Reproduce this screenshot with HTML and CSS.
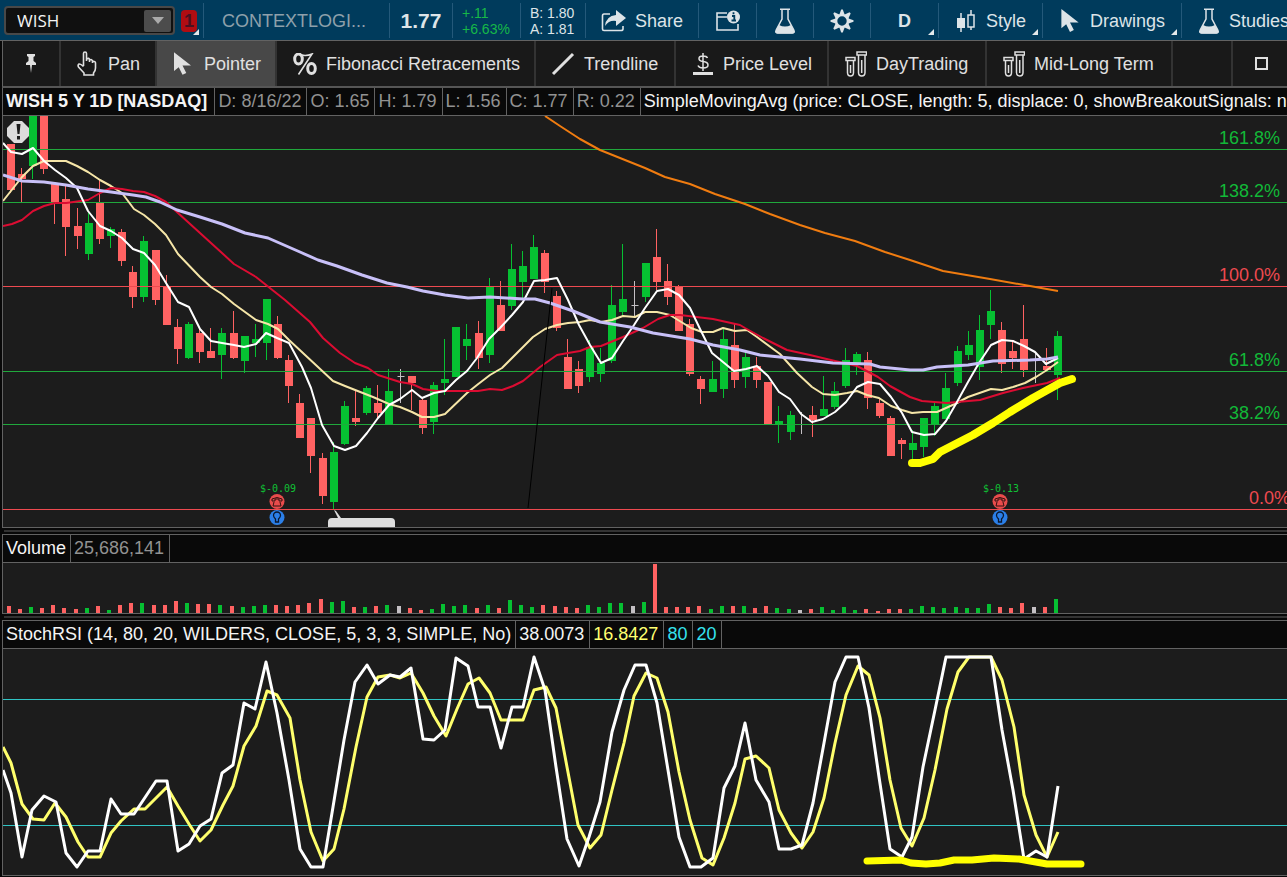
FILE: index.html
```html
<!DOCTYPE html>
<html lang="en">
<head>
<meta charset="utf-8">
<title>WISH 5 Y 1D</title>
<link rel="stylesheet" href="styles.css">
</head>
<body>
<svg class="defs" aria-hidden="true">
  <symbol id="i-pointer" viewBox="0 0 18 24"><path d="M0 0V20L5 16L9 24L13 22L9 14H18Z" fill="currentColor"/></symbol>
  <symbol id="i-flask" viewBox="0 0 22 26"><path d="M6 1.2H16M8 2V11L2.2 22Q1 25 4 25H18Q21 25 19.800 22L14 11V2" fill="none" stroke="currentColor" stroke-width="1.500"/><path d="M5 17Q11 20 17 17L21 24L19 25.500H3L1 24Z" fill="currentColor"/></symbol>
  <symbol id="i-tubes" viewBox="0 0 22 26"><g fill="none" stroke="currentColor" stroke-width="1.500"><rect x="1" y="6.500" width="9" height="3"/><path d="M2.500 9.500V21.500Q2.500 25 5.500 25Q8.500 25 8.500 21.500V9.500"/><rect x="12" y="1" width="9.500" height="3"/><path d="M13.500 4V21.500Q13.500 25 16.700 25Q20 25 20 21.500V4"/><path d="M5.500 14V22M16.700 9V22"/></g></symbol>
</svg>
<div class="app">
  <header class="topbar">
    <div class="cell symbol-cell">
      <div class="symbol-box">
        <input class="symbol-input" type="text" value="WISH" aria-label="Symbol">
        <button class="drop" aria-label="Symbol list"><svg width="12" height="7"><path d="M0 0H12L6 7Z" fill="#aaa"/></svg></button>
      </div>
      <button class="link-badge corner"><span class="badge-number">1</span></button>
    </div>
    <div class="cell company">CONTEXTLOGI...</div>
    <div class="cell price">1.77</div>
    <div class="cell change"><span>+.11</span><span>+6.63%</span></div>
    <div class="cell quote"><span>B: 1.80</span><span>A: 1.81</span></div>
    <button class="cell share"><svg width="26" height="22" viewBox="0 0 26 22"><path d="M9 4H3Q1.500 4 1.500 6V19Q1.500 20.500 3 20.500H20Q22 20.500 22 19V16" fill="none" stroke="currentColor" stroke-width="1.600"/><path d="M15 0L25 8L15 16V11Q8 10 4 16Q5 6 15 5Z" fill="currentColor"/></svg>Share</button>
    <button class="cell tool-info" aria-label="Info"><svg width="26" height="22" viewBox="0 0 26 22"><path d="M12 3H2V20H23V14M2 7H12" fill="none" stroke="currentColor" stroke-width="1.600"/><circle cx="18.500" cy="7" r="6.500" fill="currentColor"/><path d="M18.500 2.200V4.200M17 6H19.300V10.500M16.500 10.500H21" stroke="#003b5c" stroke-width="1.800" fill="none"/></svg></button>
    <button class="cell tool-small" aria-label="Lab"><svg width="22" height="26"><use href="#i-flask"/></svg></button>
    <button class="cell tool-small" aria-label="Settings"><svg width="24" height="24" viewBox="-12 -12 24 24"><circle r="6" fill="none" stroke="currentColor" stroke-width="2.600"/><g fill="currentColor"><path id="tooth" d="M-2.600 -6.500L-.8 -11.500H.8L2.600 -6.500Z"/><use href="#tooth" transform="rotate(45)"/><use href="#tooth" transform="rotate(90)"/><use href="#tooth" transform="rotate(135)"/><use href="#tooth" transform="rotate(180)"/><use href="#tooth" transform="rotate(225)"/><use href="#tooth" transform="rotate(270)"/><use href="#tooth" transform="rotate(315)"/></g></svg></button>
    <button class="cell timeframe corner">D</button>
    <button class="cell style corner"><svg width="18" height="24" viewBox="0 0 18 24"><path d="M4 4V23M14 1V6M14 18V21" stroke="currentColor" stroke-width="1.500"/><rect x="0" y="9" width="8" height="10" fill="currentColor"/><rect x="11" y="6" width="6" height="12" fill="none" stroke="currentColor" stroke-width="1.500"/></svg>Style</button>
    <button class="cell drawings corner"><svg width="18" height="23"><use href="#i-pointer"/></svg>Drawings</button>
    <button class="cell studies"><svg width="22" height="26"><use href="#i-flask"/></svg>Studies</button>
  </header>

  <nav class="toolbar">
    <button class="tool pin" aria-label="Pin"><svg width="10" height="19" viewBox="0 0 10 19"><path d="M1 0H9V2L7.500 3V7L10 9V11H6L5 19L4 11H0V9L2.500 7V3L1 2Z" fill="currentColor"/></svg></button>
    <button class="tool pan"><svg width="20" height="25" viewBox="0 0 20 25"><path d="M6.500 15V2.500Q6.500 1 8 1Q9.500 1 9.500 2.500V10M9.500 10V8Q12 6.500 12.500 8.500V11M12.500 9Q15 8 15.500 10V12M15.500 10.500Q18.500 10 18.500 12V17Q18.500 20 16.500 22V24H7V22L1.500 16Q.5 14 2 13Q3.500 12.500 6.500 15.500" fill="none" stroke="currentColor" stroke-width="1.600"/></svg>Pan</button>
    <button class="tool pointer"><svg width="17" height="23"><use href="#i-pointer"/></svg>Pointer</button>
    <button class="tool fib"><svg width="24" height="22" viewBox="0 0 24 22"><g fill="none" stroke="currentColor"><ellipse cx="5.500" cy="6" rx="3.800" ry="5" stroke-width="3"/><ellipse cx="18.500" cy="15.500" rx="3.800" ry="5" stroke-width="3"/><path d="M5.500 1Q12 4 19 1L5.500 21.500" stroke-width="1.600"/></g></svg>Fibonacci Retracements</button>
    <button class="tool trend"><svg width="24" height="24"><path d="M2 22L22 2" stroke="currentColor" stroke-width="3"/></svg>Trendline</button>
    <button class="tool price-level"><svg width="20" height="22" viewBox="0 0 20 22"><path d="M14.500 5Q13.500 3 10 3Q6 3 6 5.500Q6 8 10 8.500Q15 9 15 12Q15 15 10 15Q6 15 5 12.500M10 0V18" fill="none" stroke="currentColor" stroke-width="1.500"/><path d="M0 20.500H20" stroke="currentColor" stroke-width="3"/></svg>Price Level</button>
    <button class="tool day"><svg width="22" height="26"><use href="#i-tubes"/></svg>DayTrading</button>
    <button class="tool mid"><svg width="22" height="26"><use href="#i-tubes"/></svg>Mid-Long Term</button>
    <div class="tool blank"></div>
    <button class="tool expand" aria-label="Maximize"><svg width="13" height="13"><rect x="1" y="1" width="11" height="11" fill="none" stroke="currentColor" stroke-width="2"/></svg></button>
  </nav>

  <main class="panes">
    <section class="pane">
      <div class="legend">
        <strong class="title">WISH 5 Y 1D [NASDAQ]</strong><span class="dim">D: 8/16/22</span><span class="dim">O: 1.65</span><span class="dim">H: 1.79</span><span class="dim">L: 1.56</span><span class="dim">C: 1.77</span><span class="dim">R: 0.22</span><span class="study">SimpleMovingAvg (price: CLOSE, length: 5, displace: 0, showBreakoutSignals: no)</span>
      </div>
      <svg class="chart price-chart" id="price" role="img" aria-label="Daily price candles"></svg>
    </section>
    <div class="splitter"></div>
    <section class="pane">
      <div class="legend"><span>Volume</span><span class="dim">25,686,141</span><span class="end"></span></div>
      <svg class="chart volume-chart" id="volume" role="img" aria-label="Volume"></svg>
    </section>
    <div class="splitter"></div>
    <section class="pane">
      <div class="legend"><span>StochRSI (14, 80, 20, WILDERS, CLOSE, 5, 3, 3, SIMPLE, No)</span><span>38.0073</span><span class="yellow">16.8427</span><span class="cyan">80</span><span class="cyan">20</span><span class="end"></span></div>
      <svg class="chart stoch-chart" id="stoch" role="img" aria-label="Stochastic RSI"></svg>
    </section>
  </main>
</div>
<script src="chart.js"></script>
</body>
</html>
```
FILE: styles.css
```css
* { box-sizing: border-box; }
body {
  margin: 0;
  background: #080808;
  color: #e4e4e4;
  font: 18px/24px "Liberation Sans", Arial, sans-serif;
  overflow: hidden;
}
button, input { font: inherit; color: inherit; background: none; border: 0; padding: 0; margin: 0; }
.defs { position: absolute; width: 0; height: 0; }
.app { display: flex; flex-direction: column; }

.topbar { display: flex; height: 41px; background: #003b5c; border-bottom: 1px solid #626262; overflow: hidden; padding-top: 3px; }
.cell {
  flex: none; display: flex; align-items: center; height: 35px;
  border-right: 1px solid #24597a; white-space: nowrap; color: #dde4e8;
}
.symbol-cell { width: 204px; padding-left: 4px; gap: 6px; }
.symbol-box { display: flex; align-items: center; width: 171px; height: 29px; background: #101010; border: 2px solid #484848; border-radius: 4px; padding-right: 2px; }
.symbol-input { flex: 1; min-width: 0; padding-left: 11px; font: 17px/22px "Open Sans", "Noto Sans", sans-serif; color: #f4f4f4; outline: 0; }
.drop { display: flex; align-items: center; justify-content: center; width: 27px; height: 22px; background: #4c4c4c; border-radius: 2px; }
.link-badge { width: 18px; height: 28px; }
.badge-number { display: block; width: 16px; height: 22px; line-height: 22px; background: #b00d12; border-radius: 4px; color: #4a1020; font-weight: bold; text-align: center; }
.corner { position: relative; }
.corner::after { content: ""; position: absolute; right: 4px; bottom: 3px; border-left: 6px solid transparent; border-bottom: 6px solid #e4e8ea; }
.link-badge.corner::after { right: 0; bottom: 0; }
.company { width: 186px; padding-left: 18px; color: #8ea0ab; }
.price { width: 63px; justify-content: center; font-size: 21px; font-weight: bold; }
.change, .quote { flex-direction: column; justify-content: center; align-items: flex-start; font-size: 14px; line-height: 16px; }
.change { width: 68px; padding-left: 9px; color: #17b848; }
.quote { width: 65px; padding-left: 9px; }
.share { width: 113px; padding-left: 15px; gap: 8px; }
.tool-info { width: 58px; justify-content: center; }
.tool-small { width: 57px; justify-content: center; }
.timeframe { width: 68px; justify-content: center; font-weight: bold; }
.style { width: 104px; padding-left: 18px; gap: 11px; }
.drawings { width: 139px; padding-left: 18px; gap: 11px; }
.studies { padding-left: 16px; gap: 9px; border: 0; }

.toolbar { display: flex; height: 47px; margin-left: 2px; background: #191919; border-left: 1px solid #626262; border-bottom: 2px solid #565656; }
.tool { flex: none; display: flex; align-items: center; border-right: 2px solid #333; white-space: nowrap; color: #e0e0e0; }
.pin { width: 58px; justify-content: center; }
.pan { width: 96px; padding-left: 16px; gap: 11px; }
.pointer { width: 120px; padding-left: 17px; gap: 13px; background: #484848; }
.fib { width: 259px; padding-left: 16px; gap: 9px; }
.trend { width: 140px; padding-left: 15px; gap: 9px; }
.price-level { width: 153px; padding-left: 17px; gap: 10px; }
.day { width: 158px; padding-left: 16px; gap: 9px; }
.mid { width: 186px; padding-left: 16px; gap: 9px; }
.blank { width: 60px; }
.expand { flex: 1; padding-left: 22px; border: 0; }

.panes { display: flex; flex-direction: column; margin-left: 2px; }
.pane { border-left: 1px solid #626262; border-bottom: 1px solid #626262; overflow: hidden; }
.splitter + .pane { border-top: 1px solid #626262; }
.legend { display: flex; height: 28px; align-items: stretch; background: #090909; border-bottom: 1px solid #626262; line-height: 27px; white-space: nowrap; color: #f4f4f4; }
.legend > * { padding: 0 5px 0 3px; border-left: 1px solid #626262; }
.legend > :first-child { border-left: 0; padding-right: 4px; }
.legend > .title { padding-right: 7px; }
.legend .dim { color: #929292; }
.legend .yellow { color: #ffff70; }
.legend .cyan { color: #35e2ee; }
.splitter { height: 6px; margin-left: 2px; background: linear-gradient(#333, #333) no-repeat 0 2px / 100% 2px; }

.chart { display: block; width: 100%; background: #1c1c1c; }
.price-chart { height: 411px; }
.volume-chart { height: 50px; }
.stoch-chart { height: 226px; }
.line { fill: none; stroke-linejoin: round; }
.level-label { font: 18px "Liberation Sans", Arial, sans-serif; text-anchor: end; }
.earnings { font: 10px "DejaVu Sans Mono", monospace; text-anchor: middle; fill: #10c035; }
.up { fill: #06c032; stroke: #06c032; }
.down { fill: #ff6262; stroke: #ff6262; }
.flat { fill: #c4c0c4; stroke: #c4c0c4; }
.wick { stroke-width: 1; }
.body { stroke: none; }
```
FILE: chart.js
```javascript
const GREEN = "#20a83c", RED = "#ee4a50", CYAN = "#30c4c4";

// type, high, body top, body bottom, low, volume
const bars = `r 144 144 190 193 7|r 168 174 179 202 4|g 110 110 166 179 6|r 110 110 169 174 5|r 182 184 202 224 8
r 185 199 227 256 5|r 208 226 236 249 4|g 213 223 254 260 5|r 180 203 239 244 7|g 227 229 236 248 3
r 229 232 261 266 8|r 266 272 297 308 10|g 236 241 297 302 10|r 250 250 300 305 8|r 275 287 325 325 8
r 319 327 349 364 12|g 322 324 358 359 10|r 329 333 352 363 9|r 328 351 358 358 9|g 328 333 355 379 8
r 311 333 358 359 7|g 336 336 361 373 6|g 324 339 343 357 7|g 299 299 343 360 8|r 316 324 358 359 8
r 355 360 386 403 7|r 394 403 438 438 8|r 418 418 456 473 10|r 453 458 496 504 14|g 442 452 502 510 11
g 401 406 444 445 12|r 391 418 422 426 6|g 386 388 413 415 6|r 385 403 413 419 7|g 369 391 425 425 8
w 369 376 377 403 7|r 376 376 383 410 5|r 398 400 428 434 3|g 382 385 422 434 4|g 339 379 383 395 9
g 327 327 377 377 7|g 324 339 346 360 8|r 321 333 358 369 5|g 278 287 355 363 8|r 281 305 331 331 5
g 244 269 306 310 13|g 251 266 282 300 8|g 235 247 279 279 6|r 250 253 282 293 8|r 291 296 328 331 7
r 339 357 389 389 6|r 361 369 386 393 5|g 340 347 377 382 8|g 348 363 374 382 6|g 285 305 361 363 10
g 244 299 312 317 10|w 281 305 306 316 7|g 263 263 297 302 11|r 229 257 282 290 49|r 264 281 297 305 6
r 285 287 331 331 6|r 319 324 374 376 6|r 376 379 389 404 7|g 361 379 392 392 4|g 329 339 389 398 7
r 324 345 380 388 7|g 352 357 377 388 7|r 357 366 380 388 5|r 382 382 424 424 7|g 406 421 425 443 5
g 411 415 432 440 4|w 412 424 425 434 3|r 406 415 420 437 4|g 376 409 416 416 6|g 382 391 407 409 3
g 348 360 386 388 6|g 352 354 364 375 3|r 352 360 398 409 4|r 399 403 416 418 2|r 416 418 456 456 4
r 438 440 444 459 4|g 430 443 450 460 4|g 418 418 447 457 7|g 403 406 425 436 6|g 373 388 419 419 5
g 346 351 383 386 6|g 331 345 355 360 5|g 315 330 367 380 5|g 290 311 325 339 9|r 322 330 364 373 6
r 340 351 358 369 5|r 305 339 370 377 10|w 352 371 372 383 6|r 348 366 370 372 6|g 331 336 375 400 14`
  .split(/[|\n]/).map(s => s.trim().split(" "));

const averages = [
  ["#f07c10", 2, "545,116 560,126 580,139 600,150 645,168 665,177 690,184 715,194 745,204 770,214 800,225 825,233 855,241 885,252 910,260 943,271 990,279 1030,286 1058,291"],
  ["#f6e6a8", 2, "3,201 22,177 33,166 44,161 66,161 77,166 88,172 100,180 111,186 122,193 134,209 144,215 155,224 166,235 178,254 200,277 211,287 222,294 234,304 256,320 268,324 278,329 289,340 333,381 345,386 373,397 389,404 400,407 412,412 422,417 434,417 445,414 467,393 477,385 490,375 502,368 523,347 533,337 545,329 557,325 568,323 580,322 590,320 601,322 612,320 623,316 635,317 645,312 657,312 670,315 678,320 691,328 702,332 713,332 723,328 735,331 747,330 757,337 780,354 797,373 812,387 823,394 835,395 847,393 857,391 867,395 879,398 891,406 902,410 912,413 923,412 937,412 946,408 957,403 968,397 991,389 1002,390 1013,387 1025,383 1036,377 1047,370 1058,362"],
  ["#dc0c32", 2, "3,226 12,224 22,220 33,211 44,206 55,203 66,203 88,200 100,193 111,188 122,189 133,191 144,192 155,196 166,202 178,213 200,233 222,253 234,264 256,277 285,300 310,322 323,338 340,353 355,363 368,368 378,375 400,382 412,384 423,389 437,391 457,391 478,391 490,389 502,390 513,386 523,381 540,367 557,355 568,353 580,351 590,347 601,346 623,337 643,328 658,319 670,315 680,315 713,319 740,325 745,328 763,338 787,350 810,355 835,361 857,366 878,377 890,386 910,397 922,401 947,403 957,402 980,400 1003,393 1023,388 1047,383 1060,378"],
  ["#ffffff", 2, "3,143 11,152 22,154 33,148 44,161 55,170 66,178 77,188 88,211 100,226 111,231 122,238 133,249 144,253 155,265 166,283 178,302 189,307 200,329 211,341 222,343 234,345 244,347 256,344 266,333 277,338 289,343 302,367 311,388 322,425 334,446 345,450 356,446 367,433 378,418 389,405 400,399 412,390 422,398 434,393 445,391 456,380 467,371 477,358 489,339 500,328 512,315 523,302 534,281 545,280 557,278 568,300 579,325 590,345 601,363 612,358 623,341 634,325 645,308 657,291 668,289 679,295 690,308 701,331 712,353 723,362 734,371 746,369 757,366 768,376 779,392 790,399 801,414 812,422 823,419 835,412 846,402 857,387 868,382 880,384 891,397 902,413 912,432 924,435 935,434 946,421 957,402 968,382 979,363 991,345 1002,340 1013,341 1024,346 1035,352 1046,364 1058,358"],
  ["#c8c0f8", 3, "3,175 22,181 44,182 66,185 88,189 111,192 133,195 146,197 160,202 177,210 200,217 222,224 245,233 268,238 300,252 318,260 337,266 362,275 387,283 407,287 423,291 445,295 468,298 490,297 523,299 535,299 550,303 573,311 600,322 630,327 653,333 690,339 713,345 740,350 760,355 800,359 833,363 870,364 880,367 910,370 923,370 937,367 968,365 993,361 1030,360 1047,359 1058,357"]
];

const stochD = "3,747 11,763 22,804 33,819 44,820 55,803 66,817 78,842 88,857 100,857 111,833 121,821 134,809 145,809 167,787 178,806 189,824 200,841 211,830 223,805 233,786 244,746 256,726 267,691 277,695 290,718 300,780 311,832 323,861 334,849 344,809 356,747 367,697 378,677 390,675 400,678 411,673 423,693 434,716 446,736 457,709 468,684 479,678 490,693 501,720 523,720 534,690 546,687 556,708 567,767 578,825 590,848 601,835 612,790 624,743 634,696 646,673 657,678 668,712 679,772 690,820 702,858 713,865 724,838 735,803 745,759 756,756 769,768 779,810 791,833 802,848 813,832 824,798 835,743 846,695 858,666 869,675 880,718 890,780 901,828 912,846 924,818 935,770 947,709 958,672 969,657 991,657 1002,680 1014,727 1024,795 1036,835 1047,857 1058,832";
const stochK = "3,770 11,793 22,857 32,810 44,796 56,802 66,853 77,867 88,851 100,851 111,799 121,814 134,814 156,781 167,781 178,851 189,844 200,826 211,819 222,773 233,765 244,703 255,709 266,662 277,713 289,780 300,849 311,867 323,867 333,807 344,740 355,682 367,665 378,684 390,675 400,677 411,668 423,739 434,740 445,730 456,658 468,666 478,707 490,707 501,748 512,707 523,707 534,657 545,690 556,767 567,839 579,866 589,837 600,802 612,732 624,690 635,665 646,665 657,703 668,770 679,837 690,867 701,867 713,858 724,788 735,766 745,723 756,780 769,802 779,849 791,849 802,845 813,803 824,743 835,682 846,657 858,657 869,708 879,777 890,849 902,857 912,837 923,767 935,710 946,657 991,657 1002,730 1013,790 1024,859 1036,851 1047,857 1058,786";

const barX = i => Math.round(10.7 + i * 11.14);
const kind = { r: "down", g: "up", w: "flat" };
const hline = (y, color) => `<rect x="0" y="${y}" width="100%" height="1" fill="${color}"/>`;
const poly = (points, color, width, extra = "") =>
  `<polyline class="line" points="${points}" stroke="${color}" stroke-width="${width}" ${extra}/>`;

// Price pane
let out = "";
const candles = bars.map(([t, hi, top, bot, lo], i) => {
  const x = barX(i), c = kind[t];
  let w = 8;
  if (t === "w") w = i === 35 || i === 56 ? 7 : 1;
  return `<path class="wick ${c}" d="M${x - .5} ${hi}V${lo}"/><rect class="${c} body" x="${x - w / 2}" y="${top}" width="${w}" height="${bot - top}"/>`;
}).join("");
const levels = [[149, "161.8%", GREEN], [202, "138.2%", GREEN], [286, "100.0%", RED], [371, "61.8%", GREEN], [424, "38.2%", GREEN], [509, "0.0%", RED]];
const marker = (x, label) => `
  <text class="earnings" x="${x + 1}" y="492">${label}</text>
  <circle cx="${x}" cy="501.500" r="7.500" fill="#e84c4c"/>
  <path d="M${x - 5} 501V499Q${x} 496 ${x + 5} 499V501H${x + 2}V499H${x - 2}V501ZM${x - 3} 502L${x - 4} 506H${x + 4}L${x + 3} 502" fill="none" stroke="#301010"/>
  <circle cx="${x}" cy="517.500" r="7.500" fill="#2b7fe8"/>
  <path d="M${x - 1.5} 519Q${x - 3.5} 517 ${x - 3.5} 515.500A3.500 3.500 0 0 1 ${x + 3.5} 515.500Q${x + 3.5} 517 ${x + 1.5} 519V522H${x - 1.5}Z" fill="none" stroke="#0a1830" stroke-width="1.300"/>`;
out += `<g transform="translate(-3 -116)">${candles}</g>`;
out += levels.map(([y, , c]) => hline(y - 116, c)).join("");
out += `<g transform="translate(-3 -116)">
  ${averages.map(([c, w, p]) => poly(p, c, w)).join("")}
  <path d="M552 288L528 508" stroke="#000"/>
  ${poly("912,463 920,463 933,459 940,452 973,435 993,423 1010,412 1033,398 1060,383 1072,379", "#ffff00", 8, 'stroke-linecap="round"')}
  ${marker(277, "$-0.09")}${marker(1000, "$-0.13")}
  <path d="M334 510L336 511L341 518H391Q395 518 395 522V527H328V522Q328 518 332 518H338Z" fill="#dedede"/>
  <path d="M14 121H22L29 128V136L22 143H14L7 136V128Z" fill="#dcdcdc"/>
  <path d="M16.500 124H20.500L19.500 134H17.500ZM17 136H20V139.500H17Z" fill="#1c1c1c"/>
</g>`;
out += levels.map(([y, label, c]) =>
  `<text class="level-label" x="100%" dx="${label === "0.0%" ? 3 : -7}" y="${y - 121}" fill="${c === GREEN ? "#12b838" : c}">${label}</text>`).join("");
document.getElementById("price").innerHTML = out;

// Volume pane
document.getElementById("volume").innerHTML = bars.map((b, i) =>
  `<rect class="${kind[b[0]]} body" x="${barX(i) - 7}" y="${50 - b[5]}" width="4" height="${b[5]}"/>`).join("");

// StochRSI pane
document.getElementById("stoch").innerHTML =
  hline(50, CYAN) + hline(176, CYAN) +
  `<g transform="translate(-3 -649)">
    ${poly(stochD, "#ffff6c", 3)}${poly(stochK, "#ffffff", 3)}
    ${poly("867,861 901,860 911,863 926,864 940,863 954,860 972,860 994,858 1019,859 1047,864 1081,864", "#ffff00", 7, 'stroke-linecap="round"')}
  </g>`;
```
